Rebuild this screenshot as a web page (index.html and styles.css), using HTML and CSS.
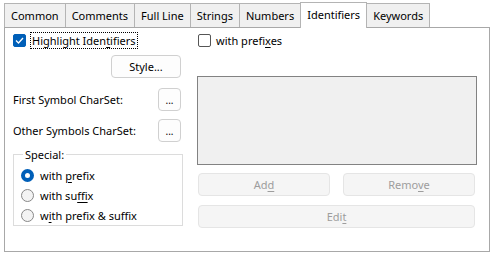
FILE: index.html
```html
<!DOCTYPE html>
<html>
<head>
    <title>Identifiers</title>
    <link rel="stylesheet" href="styles.css">
</head>
<body>
    <div class="tabs">
        <div class="tab">Common</div>
        <div class="tab">Comments</div>
        <div class="tab">Full Line</div>
        <div class="tab">Strings</div>
        <div class="tab">Numbers</div>
        <div class="tab active">Identifiers</div>
        <div class="tab">Keywords</div>
    </div>

    <div class="page">
        <div class="left">
            <label class="check">
                <span class="box checked">
                    <svg width="9" height="7" viewBox="0 0 9 7"><path d="M1 3.5 L3.5 6 L8 1" fill="none" stroke="#fff" stroke-width="1.3"/></svg>
                </span>
                <span class="focus-text">Highlight Iden<u>t</u>ifiers</span>
            </label>

            <div class="style-row">
                <button class="btn style-btn">Style...</button>
            </div>

            <div class="charset-row first">
                <span>First Symbol CharSet:</span>
                <button class="btn dots">...</button>
            </div>
            <div class="charset-row">
                <span>Other Symbols CharSet:</span>
                <button class="btn dots">...</button>
            </div>

            <fieldset class="special">
                <legend>Special:</legend>
                <label class="radio"><span class="dot on"></span><span>with <u>p</u>refix</span></label>
                <label class="radio"><span class="dot"></span><span>with su<u>f</u>fix</span></label>
                <label class="radio"><span class="dot"></span><span>w<u>i</u>th prefix &amp; suffix</span></label>
            </fieldset>
        </div>

        <div class="right">
            <label class="check">
                <span class="box"></span>
                <span>with prefi<u>x</u>es</span>
            </label>

            <div class="listbox"></div>

            <div class="btn-row">
                <button class="btn disabled">Ad<u>d</u></button>
                <button class="btn disabled">Remo<u>v</u>e</button>
            </div>
            <button class="btn disabled wide">Edi<u>t</u></button>
        </div>
    </div>
</body>
</html>
```

FILE: styles.css
```css
body {
    margin: 0;
    background: #fff;
    font-family: 'Noto Sans', 'Open Sans', sans-serif;
    font-size: 11px;
    color: #000;
}

u {
    text-decoration: underline;
    text-underline-offset: 2px;
}

.tabs {
    display: flex;
    align-items: flex-end;
    height: 27px;
    padding-left: 4px;
}

.tab {
    height: 23px;
    line-height: 23px;
    padding: 0 6px;
    border: 1px solid #b4b4b4;
    border-bottom: none;
    background: #f0f0f0;
    margin-right: -1px;
}

.tab.active {
    position: relative;
    height: 25px;
    line-height: 24px;
    background: #fff;
    margin-bottom: -1px;
    z-index: 1;
}

.page {
    display: flex;
    gap: 14px;
    height: 225px;
    margin: 0 4px;
    padding: 5px 0 0 8px;
    box-sizing: border-box;
    border: 1px solid #a8a8a8;
}

.left {
    width: 170px;
}

.right {
    width: 280px;
}

.check {
    display: flex;
    align-items: center;
    height: 15px;
    gap: 5px;
}

.box {
    width: 11px;
    height: 11px;
    border: 1px solid #555;
    border-radius: 2px;
    display: flex;
    align-items: center;
    justify-content: center;
    background: #fff;
}

.box.checked {
    background: #005fb8;
    border-color: #005fb8;
}

.focus-text {
    outline: 1px dotted #000;
    outline-offset: 0;
    padding: 0 1px;
}

.btn {
    font-family: inherit;
    font-size: 11px;
    background: #fdfdfd;
    border: 1px solid #d0d0d0;
    border-radius: 4px;
    height: 23px;
    padding: 0;
    color: #000;
}

.btn.disabled {
    background: #f5f5f5;
    border-color: #e5e5e5;
    color: #9d9d9d;
}

.style-row {
    display: flex;
    justify-content: flex-end;
    margin-top: 7px;
    padding-right: 2px;
}

.style-btn {
    width: 70px;
}

.charset-row {
    display: flex;
    justify-content: space-between;
    align-items: center;
    margin-top: 8px;
    padding-right: 2px;
}

.charset-row.first {
    margin-top: 10px;
}

.dots {
    width: 23px;
    height: 23px;
    font-size: 10px;
}

.special {
    box-sizing: border-box;
    margin: 5px 0 0;
    padding: 3px 0 0 7px;
    height: 79px;
    border: 1px solid #dcdcdc;
    border-radius: 0;
}

.special legend {
    padding: 0 2px;
    margin-left: 2px;
}

.radio {
    display: flex;
    align-items: center;
    gap: 6px;
    height: 20px;
}

.dot {
    width: 11px;
    height: 11px;
    border: 1px solid #888;
    border-radius: 50%;
    background: #f3f3f3;
}

.dot.on {
    width: 5px;
    height: 5px;
    border: 4px solid #005fb8;
    background: #fff;
}

.right .check {
    margin-left: 1px;
}

.listbox {
    margin-top: 28px;
    height: 87px;
    border: 1px solid #828282;
    background: #f0f0f0;
}

.btn-row {
    display: flex;
    justify-content: space-between;
    margin-top: 8px;
    padding-left: 1px;
    width: 277px;
}

.btn-row .btn {
    width: 132px;
}

.wide {
    display: block;
    width: 277px;
    margin: 9px 0 0 1px;
}
```
